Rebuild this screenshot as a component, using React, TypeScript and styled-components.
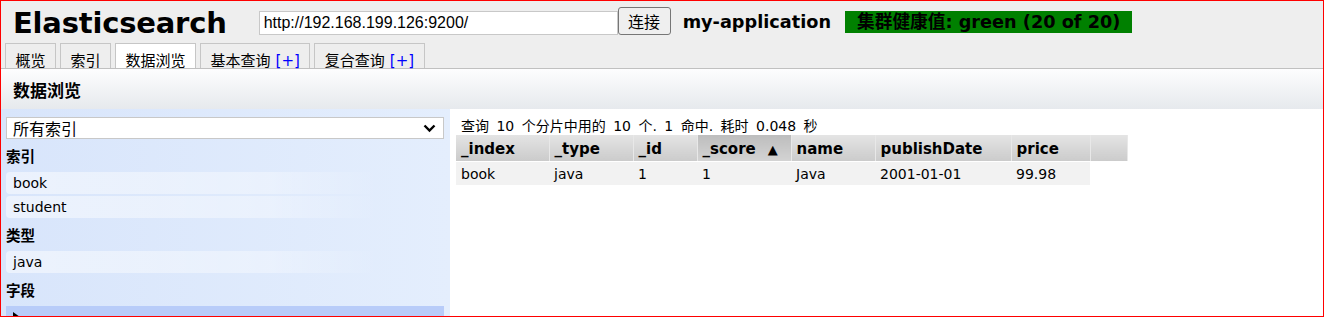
import React from 'react';
import styled, { createGlobalStyle } from 'styled-components';

const Global = createGlobalStyle`
  html, body { margin: 0; padding: 0; background: #fff; }
  body { font-family: "DejaVu Sans", "Noto Sans CJK SC", sans-serif; color: #000; }
  * { box-sizing: border-box; }
`;

const Frame = styled.div`
  width: 1324px;
  height: 317px;
  border: 1px solid #f00;
  overflow: hidden;
  display: flex;
  flex-direction: column;
`;

const Header = styled.header`
  height: 68px;
  flex: none;
  background: #eee;
  border-bottom: 1px solid #c0c0c0;
  display: flex;
  flex-direction: column;
`;

const TopRow = styled.div`
  height: 42px;
  display: flex;
  align-items: flex-start;
  padding-left: 12px;
`;

const Title = styled.h1`
  margin: 5px 0 0 0;
  font-size: 29px;
  line-height: 34px;
  font-weight: bold;
  letter-spacing: -0.2px;
`;

const UrlInput = styled.input`
  margin: 10px 0 0 32px;
  width: 359px;
  height: 24px;
  border: 1px solid #c8c8c8;
  background: #fff;
  padding: 0 4px;
  font-family: "Liberation Sans", Arial, sans-serif;
  font-size: 16px;
  color: #000;
  outline: none;
`;

const ConnectButton = styled.button`
  margin-top: 6px;
  width: 53px;
  height: 28px;
  border: 1px solid #767676;
  border-radius: 3px;
  background: #efefef;
  font-family: "Noto Sans CJK SC", sans-serif;
  font-size: 16px;
  padding: 0;
  color: #000;
`;

const AppName = styled.span`
  margin: 9px 0 0 12px;
  font-size: 17.7px;
  line-height: 24px;
  font-weight: bold;
`;

const Health = styled.span<{ $status: string }>`
  margin: 10px 0 0 14px;
  height: 22px;
  padding: 0 12px;
  background: ${(p) => (p.$status === 'green' ? '#008000' : p.$status === 'yellow' ? '#ff0' : '#f00')};
  font-size: 17.7px;
  line-height: 22px;
  font-weight: bold;
  white-space: nowrap;
`;

const Tabs = styled.nav`
  height: 25px;
  display: flex;
  gap: 4px;
  padding-left: 4px;
`;

const Tab = styled.div<{ $active?: boolean }>`
  height: 25px;
  padding: 4px 9.5px 0;
  border: 1px solid #c6c6c6;
  border-bottom: none;
  background: ${(p) => (p.$active ? '#fff' : '#eee')};
  font-family: "Noto Sans CJK SC", sans-serif;
  font-size: 15px;
  line-height: 23px;
  white-space: nowrap;
`;

const Plus = styled.span`
  color: #00f;
  margin-left: 5px;
  font-family: "DejaVu Sans", sans-serif;
  font-size: 15px;
`;

const SectionBar = styled.div`
  height: 40px;
  flex: none;
  display: flex;
  align-items: center;
  padding-left: 12px;
  background: linear-gradient(#fdfdfe, #e6e9ed);
  font-family: "Noto Sans CJK SC", sans-serif;
  font-size: 17px;
  font-weight: bold;
`;

const Main = styled.div`
  flex: 1;
  display: flex;
  min-height: 0;
`;

const Sidebar = styled.aside`
  width: 449px;
  flex: none;
  padding: 8px 6px 0 5px;
  background: linear-gradient(to right, #d8e5fb, #e4eefd);
  display: flex;
  flex-direction: column;
`;

const SelectBox = styled.div`
  height: 22px;
  flex: none;
  background: #fff;
  border: 1px solid #c8c8c8;
  display: flex;
  align-items: center;
  justify-content: space-between;
  padding: 0 7px 0 6px;
  font-family: "Noto Sans CJK SC", sans-serif;
  font-size: 16px;
`;

const GroupLabel = styled.div`
  height: 33px;
  flex: none;
  display: flex;
  align-items: center;
  padding-bottom: 1px;
  font-family: "Noto Sans CJK SC", sans-serif;
  font-size: 14.5px;
  font-weight: bold;
`;

const Item = styled.div`
  height: 22px;
  flex: none;
  padding-left: 7px;
  display: flex;
  align-items: center;
  border-radius: 4px;
  background: linear-gradient(to right, rgba(255, 255, 255, 0.5), rgba(255, 255, 255, 0.35) 60%, rgba(255, 255, 255, 0) 85%);
  font-size: 14px;
  & + & { margin-top: 2px; }
`;

const FieldRow = styled.div`
  height: 22px;
  flex: none;
  background: #b8ccf9;
  position: relative;
  &::before {
    content: '';
    position: absolute;
    left: 7px;
    top: 6px;
    border-left: 7px solid #000;
    border-top: 5px solid transparent;
    border-bottom: 5px solid transparent;
  }
`;

const Content = styled.section`
  flex: 1;
  padding: 8px 0 0 6px;
  background: #fff;
`;

const Summary = styled.div`
  margin-left: 5px;
  height: 18px;
  line-height: 18px;
  font-size: 14px;
  word-spacing: 3px;
  white-space: nowrap;
`;

const Table = styled.table`
  border-collapse: collapse;
  border-spacing: 0;
  table-layout: fixed;
`;

const Th = styled.th<{ $sorted?: boolean }>`
  height: 26px;
  padding: 2px 0 0 5px;
  text-align: left;
  font-size: 15px;
  font-weight: bold;
  white-space: nowrap;
  border-right: 1px solid #e8e8e8;
  border-bottom: 1px solid #fff;
  background: ${(p) => (p.$sorted ? 'linear-gradient(#bdbdbd, #d3d3d3)' : 'linear-gradient(#e4e4e4, #cbcbcb)')};
`;

const Arrow = styled.span`
  font-size: 13px;
  margin-left: 12px;
`;

const Td = styled.td`
  height: 24px;
  padding: 1px 0 0 5px;
  font-size: 14px;
  background: #f2f2f2;
  white-space: nowrap;
`;

const columns: { key: string; width: number; sorted?: boolean }[] = [
  { key: '_index', width: 93 },
  { key: '_type', width: 84 },
  { key: '_id', width: 64 },
  { key: '_score', width: 94, sorted: true },
  { key: 'name', width: 84 },
  { key: 'publishDate', width: 136 },
  { key: 'price', width: 79 },
];

const rows = [['book', 'java', '1', '1', 'Java', '2001-01-01', '99.98']];

const Chevron = () => (
  <svg width="13" height="9" viewBox="0 0 13 9">
    <path d="M1.5 1.5 L6.5 6.5 L11.5 1.5" fill="none" stroke="#000" strokeWidth="2.4" />
  </svg>
);

export default function App() {
  return (
    <>
      <Global />
      <Frame>
        <Header>
          <TopRow>
            <Title>Elasticsearch</Title>
            <UrlInput defaultValue="http://192.168.199.126:9200/" />
            <ConnectButton>连接</ConnectButton>
            <AppName>my-application</AppName>
            <Health $status="green">集群健康值: green (20 of 20)</Health>
          </TopRow>
          <Tabs>
            <Tab>概览</Tab>
            <Tab>索引</Tab>
            <Tab $active>数据浏览</Tab>
            <Tab>
              基本查询<Plus>[+]</Plus>
            </Tab>
            <Tab>
              复合查询<Plus>[+]</Plus>
            </Tab>
          </Tabs>
        </Header>
        <SectionBar>数据浏览</SectionBar>
        <Main>
          <Sidebar>
            <SelectBox>
              <span>所有索引</span>
              <Chevron />
            </SelectBox>
            <GroupLabel>索引</GroupLabel>
            <Item>book</Item>
            <Item>student</Item>
            <GroupLabel>类型</GroupLabel>
            <Item>java</Item>
            <GroupLabel>字段</GroupLabel>
            <FieldRow />
          </Sidebar>
          <Content>
            <Summary>查询 10 个分片中用的 10 个. 1 命中. 耗时 0.048 秒</Summary>
            <Table>
              <colgroup>
                {columns.map((c) => (
                  <col key={c.key} style={{ width: c.width }} />
                ))}
                <col style={{ width: 37 }} />
              </colgroup>
              <thead>
                <tr>
                  {columns.map((c) => (
                    <Th key={c.key} $sorted={c.sorted}>
                      {c.key}
                      {c.sorted && <Arrow>▲</Arrow>}
                    </Th>
                  ))}
                  <Th />
                </tr>
              </thead>
              <tbody>
                {rows.map((r, i) => (
                  <tr key={i}>
                    {r.map((v, j) => (
                      <Td key={j}>{v}</Td>
                    ))}
                  </tr>
                ))}
              </tbody>
            </Table>
          </Content>
        </Main>
      </Frame>
    </>
  );
}
